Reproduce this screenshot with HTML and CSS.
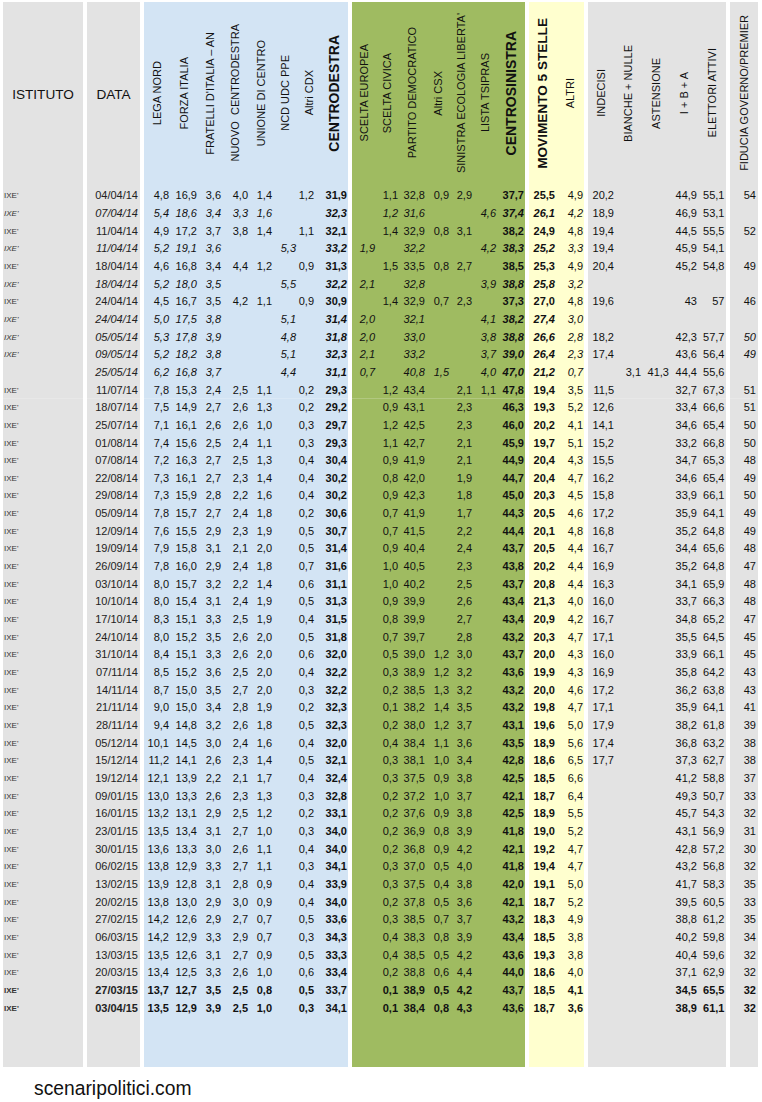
FILE: index.html
```html
<!DOCTYPE html>
<html lang="it">
<head>
<meta charset="utf-8">
<title>Sondaggi IXE'</title>
<link rel="stylesheet" href="styles.css">
</head>
<body>
<main class="page">
<table class="polls">
<colgroup>
<col class="w80 gray"><col class="w57 gray">
<col class="w30 blue"><col class="w28 blue"><col class="w24 blue"><col class="w27 blue"><col class="w24 blue"><col class="w24 blue"><col class="w18 blue"><col class="w33 blue">
<col class="w28 green"><col class="w23 green"><col class="w27 green"><col class="w24 green"><col class="w23 green"><col class="w24 green"><col class="w28 green">
<col class="w31 yellow"><col class="w28 yellow">
<col class="w31 gray"><col class="w27 gray"><col class="w28 gray"><col class="w28 gray"><col class="w28 gray">
<col class="w32 gray">
</colgroup>
<thead>
<tr>
<th class="plain">ISTITUTO</th><th class="plain">DATA</th>
<th><span class="v">LEGA NORD</span></th><th><span class="v">FORZA ITALIA</span></th><th><span class="v">FRATELLI D'ITALIA – AN</span></th><th><span class="v">NUOVO &nbsp;CENTRODESTRA</span></th><th><span class="v">UNIONE DI CENTRO</span></th><th><span class="v">NCD UDC PPE</span></th><th class="nudge6"><span class="v">Altri CDX</span></th><th class="nudge5"><span class="v big">CENTRODESTRA</span></th>
<th><span class="v">SCELTA EUROPEA</span></th><th><span class="v">SCELTA CIVICA</span></th><th><span class="v">PARTITO DEMOCRATICO</span></th><th><span class="v">Altri CSX</span></th><th><span class="v">SINISTRA ECOLOGIA LIBERTA'</span></th><th><span class="v">LISTA TSIPRAS</span></th><th><span class="v big">CENTROSINISTRA</span></th>
<th><span class="v big m5s">MOVIMENTO 5 STELLE</span></th><th><span class="v">ALTRI</span></th>
<th><span class="v">INDECISI</span></th><th><span class="v">BIANCHE + NULLE</span></th><th><span class="v">ASTENSIONE</span></th><th><span class="v">I + B + A</span></th><th><span class="v">ELETTORI ATTIVI</span></th>
<th><span class="v">FIDUCIA GOVERNO/PREMIER</span></th>
</tr>
</thead>
<tbody>
<tr><td>IXE'<td>04/04/14<td>4,8<td>16,9<td>3,6<td>4,0<td>1,4<td><td>1,2<td>31,9<td><td>1,1<td>32,8<td>0,9<td>2,9<td><td>37,7<td>25,5<td>4,9<td>20,2<td><td><td>44,9<td>55,1<td>54
<tr class="est"><td>IXE'<td>07/04/14<td>5,4<td>18,6<td>3,4<td>3,3<td>1,6<td><td><td>32,3<td><td>1,2<td>31,6<td><td><td>4,6<td>37,4<td>26,1<td>4,2<td>18,9<td><td><td>46,9<td>53,1<td>
<tr><td>IXE'<td>11/04/14<td>4,9<td>17,2<td>3,7<td>3,8<td>1,4<td><td>1,1<td>32,1<td><td>1,4<td>32,9<td>0,8<td>3,1<td><td>38,2<td>24,9<td>4,8<td>19,4<td><td><td>44,5<td>55,5<td>52
<tr class="est"><td>IXE'<td>11/04/14<td>5,2<td>19,1<td>3,6<td><td><td>5,3<td><td>33,2<td>1,9<td><td>32,2<td><td><td>4,2<td>38,3<td>25,2<td>3,3<td>19,4<td><td><td>45,9<td>54,1<td>
<tr><td>IXE'<td>18/04/14<td>4,6<td>16,8<td>3,4<td>4,4<td>1,2<td><td>0,9<td>31,3<td><td>1,5<td>33,5<td>0,8<td>2,7<td><td>38,5<td>25,3<td>4,9<td>20,4<td><td><td>45,2<td>54,8<td>49
<tr class="est"><td>IXE'<td>18/04/14<td>5,2<td>18,0<td>3,5<td><td><td>5,5<td><td>32,2<td>2,1<td><td>32,8<td><td><td>3,9<td>38,8<td>25,8<td>3,2<td><td><td><td><td><td>
<tr><td>IXE'<td>24/04/14<td>4,5<td>16,7<td>3,5<td>4,2<td>1,1<td><td>0,9<td>30,9<td><td>1,4<td>32,9<td>0,7<td>2,3<td><td>37,3<td>27,0<td>4,8<td>19,6<td><td><td>43<td>57<td>46
<tr class="est"><td>IXE'<td>24/04/14<td>5,0<td>17,5<td>3,8<td><td><td>5,1<td><td>31,4<td>2,0<td><td>32,1<td><td><td>4,1<td>38,2<td>27,4<td>3,0<td><td><td><td><td><td>
<tr class="est"><td>IXE'<td>05/05/14<td>5,3<td>17,8<td>3,9<td><td><td>4,8<td><td>31,8<td>2,0<td><td>33,0<td><td><td>3,8<td>38,8<td>26,6<td>2,8<td>18,2<td><td><td>42,3<td>57,7<td>50
<tr class="est"><td>IXE'<td>09/05/14<td>5,2<td>18,2<td>3,8<td><td><td>5,1<td><td>32,3<td>2,1<td><td>33,2<td><td><td>3,7<td>39,0<td>26,4<td>2,3<td>17,4<td><td><td>43,6<td>56,4<td>49
<tr class="est"><td><td>25/05/14<td>6,2<td>16,8<td>3,7<td><td><td>4,4<td><td>31,1<td>0,7<td><td>40,8<td>1,5<td><td>4,0<td>47,0<td>21,2<td>0,7<td><td>3,1<td>41,3<td>44,4<td>55,6<td>
<tr class="seam"><td>IXE'<td>11/07/14<td>7,8<td>15,3<td>2,4<td>2,5<td>1,1<td><td>0,2<td>29,3<td><td>1,2<td>43,4<td><td>2,1<td>1,1<td>47,8<td>19,4<td>3,5<td>11,5<td><td><td>32,7<td>67,3<td>51
<tr><td>IXE'<td>18/07/14<td>7,5<td>14,9<td>2,7<td>2,6<td>1,3<td><td>0,2<td>29,2<td><td>0,9<td>43,1<td><td>2,3<td><td>46,3<td>19,3<td>5,2<td>12,6<td><td><td>33,4<td>66,6<td>51
<tr><td>IXE'<td>25/07/14<td>7,1<td>16,1<td>2,6<td>2,6<td>1,0<td><td>0,3<td>29,7<td><td>1,2<td>42,5<td><td>2,3<td><td>46,0<td>20,2<td>4,1<td>14,1<td><td><td>34,6<td>65,4<td>50
<tr><td>IXE'<td>01/08/14<td>7,4<td>15,6<td>2,5<td>2,4<td>1,1<td><td>0,3<td>29,3<td><td>1,1<td>42,7<td><td>2,1<td><td>45,9<td>19,7<td>5,1<td>15,2<td><td><td>33,2<td>66,8<td>50
<tr><td>IXE'<td>07/08/14<td>7,2<td>16,3<td>2,7<td>2,5<td>1,3<td><td>0,4<td>30,4<td><td>0,9<td>41,9<td><td>2,1<td><td>44,9<td>20,4<td>4,3<td>15,5<td><td><td>34,7<td>65,3<td>48
<tr><td>IXE'<td>22/08/14<td>7,3<td>16,1<td>2,7<td>2,3<td>1,4<td><td>0,4<td>30,2<td><td>0,8<td>42,0<td><td>1,9<td><td>44,7<td>20,4<td>4,7<td>16,2<td><td><td>34,6<td>65,4<td>49
<tr><td>IXE'<td>29/08/14<td>7,3<td>15,9<td>2,8<td>2,2<td>1,6<td><td>0,4<td>30,2<td><td>0,9<td>42,3<td><td>1,8<td><td>45,0<td>20,3<td>4,5<td>15,8<td><td><td>33,9<td>66,1<td>50
<tr><td>IXE'<td>05/09/14<td>7,8<td>15,7<td>2,7<td>2,4<td>1,8<td><td>0,2<td>30,6<td><td>0,7<td>41,9<td><td>1,7<td><td>44,3<td>20,5<td>4,6<td>17,2<td><td><td>35,9<td>64,1<td>49
<tr><td>IXE'<td>12/09/14<td>7,6<td>15,5<td>2,9<td>2,3<td>1,9<td><td>0,5<td>30,7<td><td>0,7<td>41,5<td><td>2,2<td><td>44,4<td>20,1<td>4,8<td>16,8<td><td><td>35,2<td>64,8<td>49
<tr><td>IXE'<td>19/09/14<td>7,9<td>15,8<td>3,1<td>2,1<td>2,0<td><td>0,5<td>31,4<td><td>0,9<td>40,4<td><td>2,4<td><td>43,7<td>20,5<td>4,4<td>16,7<td><td><td>34,4<td>65,6<td>48
<tr><td>IXE'<td>26/09/14<td>7,8<td>16,0<td>2,9<td>2,4<td>1,8<td><td>0,7<td>31,6<td><td>1,0<td>40,5<td><td>2,3<td><td>43,8<td>20,2<td>4,4<td>16,9<td><td><td>35,2<td>64,8<td>47
<tr><td>IXE'<td>03/10/14<td>8,0<td>15,7<td>3,2<td>2,2<td>1,4<td><td>0,6<td>31,1<td><td>1,0<td>40,2<td><td>2,5<td><td>43,7<td>20,8<td>4,4<td>16,3<td><td><td>34,1<td>65,9<td>48
<tr><td>IXE'<td>10/10/14<td>8,0<td>15,4<td>3,1<td>2,4<td>1,9<td><td>0,5<td>31,3<td><td>0,9<td>39,9<td><td>2,6<td><td>43,4<td>21,3<td>4,0<td>16,0<td><td><td>33,7<td>66,3<td>48
<tr><td>IXE'<td>17/10/14<td>8,3<td>15,1<td>3,3<td>2,5<td>1,9<td><td>0,4<td>31,5<td><td>0,8<td>39,9<td><td>2,7<td><td>43,4<td>20,9<td>4,2<td>16,7<td><td><td>34,8<td>65,2<td>47
<tr><td>IXE'<td>24/10/14<td>8,0<td>15,2<td>3,5<td>2,6<td>2,0<td><td>0,5<td>31,8<td><td>0,7<td>39,7<td><td>2,8<td><td>43,2<td>20,3<td>4,7<td>17,1<td><td><td>35,5<td>64,5<td>45
<tr><td>IXE'<td>31/10/14<td>8,4<td>15,1<td>3,3<td>2,6<td>2,0<td><td>0,6<td>32,0<td><td>0,5<td>39,0<td>1,2<td>3,0<td><td>43,7<td>20,0<td>4,3<td>16,0<td><td><td>33,9<td>66,1<td>45
<tr><td>IXE'<td>07/11/14<td>8,5<td>15,2<td>3,6<td>2,5<td>2,0<td><td>0,4<td>32,2<td><td>0,3<td>38,9<td>1,2<td>3,2<td><td>43,6<td>19,9<td>4,3<td>16,9<td><td><td>35,8<td>64,2<td>43
<tr><td>IXE'<td>14/11/14<td>8,7<td>15,0<td>3,5<td>2,7<td>2,0<td><td>0,3<td>32,2<td><td>0,2<td>38,5<td>1,3<td>3,2<td><td>43,2<td>20,0<td>4,6<td>17,2<td><td><td>36,2<td>63,8<td>43
<tr><td>IXE'<td>21/11/14<td>9,0<td>15,0<td>3,4<td>2,8<td>1,9<td><td>0,2<td>32,3<td><td>0,1<td>38,2<td>1,4<td>3,5<td><td>43,2<td>19,8<td>4,7<td>17,1<td><td><td>35,9<td>64,1<td>41
<tr><td>IXE'<td>28/11/14<td>9,4<td>14,8<td>3,2<td>2,6<td>1,8<td><td>0,5<td>32,3<td><td>0,2<td>38,0<td>1,2<td>3,7<td><td>43,1<td>19,6<td>5,0<td>17,9<td><td><td>38,2<td>61,8<td>39
<tr><td>IXE'<td>05/12/14<td>10,1<td>14,5<td>3,0<td>2,4<td>1,6<td><td>0,4<td>32,0<td><td>0,4<td>38,4<td>1,1<td>3,6<td><td>43,5<td>18,9<td>5,6<td>17,4<td><td><td>36,8<td>63,2<td>38
<tr><td>IXE'<td>15/12/14<td>11,2<td>14,1<td>2,6<td>2,3<td>1,4<td><td>0,5<td>32,1<td><td>0,3<td>38,1<td>1,0<td>3,4<td><td>42,8<td>18,6<td>6,5<td>17,7<td><td><td>37,3<td>62,7<td>38
<tr><td>IXE'<td>19/12/14<td>12,1<td>13,9<td>2,2<td>2,1<td>1,7<td><td>0,4<td>32,4<td><td>0,3<td>37,5<td>0,9<td>3,8<td><td>42,5<td>18,5<td>6,6<td><td><td><td>41,2<td>58,8<td>37
<tr><td>IXE'<td>09/01/15<td>13,0<td>13,3<td>2,6<td>2,3<td>1,3<td><td>0,3<td>32,8<td><td>0,2<td>37,2<td>1,0<td>3,7<td><td>42,1<td>18,7<td>6,4<td><td><td><td>49,3<td>50,7<td>33
<tr><td>IXE'<td>16/01/15<td>13,2<td>13,1<td>2,9<td>2,5<td>1,2<td><td>0,2<td>33,1<td><td>0,2<td>37,6<td>0,9<td>3,8<td><td>42,5<td>18,9<td>5,5<td><td><td><td>45,7<td>54,3<td>32
<tr><td>IXE'<td>23/01/15<td>13,5<td>13,4<td>3,1<td>2,7<td>1,0<td><td>0,3<td>34,0<td><td>0,2<td>36,9<td>0,8<td>3,9<td><td>41,8<td>19,0<td>5,2<td><td><td><td>43,1<td>56,9<td>31
<tr><td>IXE'<td>30/01/15<td>13,6<td>13,3<td>3,0<td>2,6<td>1,1<td><td>0,4<td>34,0<td><td>0,2<td>36,8<td>0,9<td>4,2<td><td>42,1<td>19,2<td>4,7<td><td><td><td>42,8<td>57,2<td>30
<tr><td>IXE'<td>06/02/15<td>13,8<td>12,9<td>3,3<td>2,7<td>1,1<td><td>0,3<td>34,1<td><td>0,3<td>37,0<td>0,5<td>4,0<td><td>41,8<td>19,4<td>4,7<td><td><td><td>43,2<td>56,8<td>32
<tr><td>IXE'<td>13/02/15<td>13,9<td>12,8<td>3,1<td>2,8<td>0,9<td><td>0,4<td>33,9<td><td>0,3<td>37,5<td>0,4<td>3,8<td><td>42,0<td>19,1<td>5,0<td><td><td><td>41,7<td>58,3<td>35
<tr><td>IXE'<td>20/02/15<td>13,8<td>13,0<td>2,9<td>3,0<td>0,9<td><td>0,4<td>34,0<td><td>0,2<td>37,8<td>0,5<td>3,6<td><td>42,1<td>18,7<td>5,2<td><td><td><td>39,5<td>60,5<td>33
<tr><td>IXE'<td>27/02/15<td>14,2<td>12,6<td>2,9<td>2,7<td>0,7<td><td>0,5<td>33,6<td><td>0,3<td>38,5<td>0,7<td>3,7<td><td>43,2<td>18,3<td>4,9<td><td><td><td>38,8<td>61,2<td>35
<tr><td>IXE'<td>06/03/15<td>14,2<td>12,9<td>3,3<td>2,9<td>0,7<td><td>0,3<td>34,3<td><td>0,4<td>38,3<td>0,8<td>3,9<td><td>43,4<td>18,5<td>3,8<td><td><td><td>40,2<td>59,8<td>34
<tr><td>IXE'<td>13/03/15<td>13,5<td>12,6<td>3,1<td>2,7<td>0,9<td><td>0,5<td>33,3<td><td>0,4<td>38,5<td>0,5<td>4,2<td><td>43,6<td>19,3<td>3,8<td><td><td><td>40,4<td>59,6<td>32
<tr><td>IXE'<td>20/03/15<td>13,4<td>12,5<td>3,3<td>2,6<td>1,0<td><td>0,6<td>33,4<td><td>0,2<td>38,8<td>0,6<td>4,4<td><td>44,0<td>18,6<td>4,0<td><td><td><td>37,1<td>62,9<td>32
<tr class="recent"><td>IXE'<td>27/03/15<td>13,7<td>12,7<td>3,5<td>2,5<td>0,8<td><td>0,5<td>33,7<td><td>0,1<td>38,9<td>0,5<td>4,2<td><td>43,7<td>18,5<td>4,1<td><td><td><td>34,5<td>65,5<td>32
<tr class="recent"><td>IXE'<td>03/04/15<td>13,5<td>12,9<td>3,9<td>2,5<td>1,0<td><td>0,3<td>34,1<td><td>0,1<td>38,4<td>0,8<td>4,3<td><td>43,6<td>18,7<td>3,6<td><td><td><td>38,9<td>61,1<td>32
<tr class="fill"><td><td><td><td><td><td><td><td><td><td><td><td><td><td><td><td><td><td><td><td><td><td><td><td><td><td>
</tbody>
</table>
<p class="site">scenaripolitici.com</p>
</main>
</body>
</html>
```
FILE: styles.css
```css
html, body {
  margin: 0;
  background: #fff;
}
.page {
  padding: 2px 0 0 3px;
  font-family: "Liberation Sans", Arial, sans-serif;
  color: #111;
}
.polls {
  table-layout: fixed;
  width: 755px;
  border-collapse: separate;
  border-spacing: 0;
  font-size: 11px;
}
.gray { background: #e3e3e3; }
.blue { background: #d3e4f4; }
.green { background: #9fbb61; }
.yellow { background: #ffffcf; }
.w18 { width: 18px; }
.w23 { width: 23px; }
.w24 { width: 24px; }
.w27 { width: 27px; }
.w28 { width: 28px; }
.w30 { width: 30px; }
.w31 { width: 31px; }
.w32 { width: 32px; }
.w33 { width: 33px; }
.w57 { width: 57px; }
.w80 { width: 80px; }

th {
  box-sizing: border-box;
  height: 185px;
  padding: 0 0 1px;
  font-weight: normal;
  text-align: center;
  vertical-align: middle;
}
td {
  height: 17.67px;
  padding: 0 1px 0 0;
  line-height: 17px;
  text-align: right;
  vertical-align: middle;
  white-space: nowrap;
  overflow: visible;
}
/* white gutter at the left of each coloured band */
tr > :nth-child(2),
tr > :nth-child(3),
tr > :nth-child(11),
tr > :nth-child(18),
tr > :nth-child(20),
tr > :nth-child(25) {
  border-left: 4px solid #fff;
}
.plain { font-size: 13.6px; }
.v {
  display: inline-block;
  writing-mode: vertical-rl;
  transform: rotate(180deg);
  font-size: 11px;
  line-height: 13px;
  white-space: nowrap;
}
.big {
  font-size: 14px;
  font-weight: bold;
}
.m5s { font-size: 13.6px; }
.nudge6 { padding-left: 6px; }
.nudge5 { padding-left: 5px; }

td:first-child {
  padding: 0 0 0 1px;
  font-size: 8px;
  text-align: left;
  color: #333;
}
td:nth-child(2) { padding-right: 2px; color: #222; }
td:nth-child(10),
td:nth-child(17),
td:nth-child(18) { font-weight: bold; }
td:nth-child(24) { padding-right: 1.5px; }
td:nth-child(25) { padding-right: 2px; }

.est td:nth-child(-n+19),
.est td:nth-child(25) { font-style: italic; }
.recent td { font-weight: bold; }
.seam td { box-shadow: inset 0 -1px rgba(255, 255, 255, 0.2); }
.fill td { height: 50.3px; }

.site {
  margin: 10px 0 0 31px;
  font-size: 19.3px;
  line-height: 24px;
  color: #111;
}
```
